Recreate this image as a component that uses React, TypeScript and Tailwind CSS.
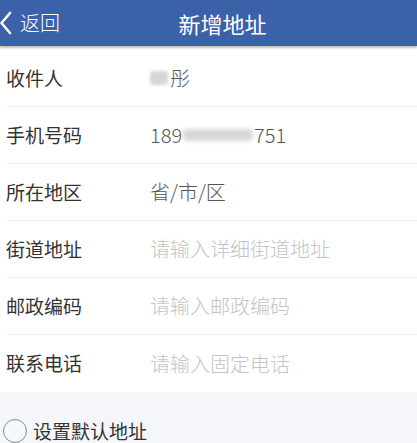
const font = { fontFamily: '"Noto Sans CJK SC", "Noto Sans", sans-serif' };

type Row = { label: string; value?: string; placeholder?: string; blur?: 'name' | 'phone' };

const rows: Row[] = [
  { label: '收件人', value: '彤', blur: 'name' },
  { label: '手机号码', value: '189', blur: 'phone' },
  { label: '所在地区', value: '省/市/区' },
  { label: '街道地址', placeholder: '请输入详细街道地址' },
  { label: '邮政编码', placeholder: '请输入邮政编码' },
  { label: '联系电话', placeholder: '请输入固定电话' },
];

function Value({ row }: { row: Row }) {
  if (row.placeholder) return <span className="text-[#c4c4c4]">{row.placeholder}</span>;
  if (row.blur === 'name')
    return (
      <span className="flex items-center text-[#555]">
        <span className="mr-[2px] inline-block h-[14px] w-[18px] rounded-sm bg-[#d6d6d6] blur-[1.5px]" />
        {row.value}
      </span>
    );
  if (row.blur === 'phone')
    return (
      <span className="flex items-center text-[#555]">
        {row.value}
        <span className="mx-[1px] inline-block h-[12px] w-[70px] rounded-sm bg-[#d8d8d8] blur-[2px]" />
        751
      </span>
    );
  return <span className="text-[#555]">{row.value}</span>;
}

export default function App() {
  return (
    <div className="flex h-[443px] w-[417px] flex-col overflow-hidden bg-[#f4f6f9]" style={font}>
      <div className="relative flex h-[46px] shrink-0 items-center justify-center bg-[#3b62a9] pl-[28px] shadow-[0_2px_2px_rgba(0,0,0,0.25)]">
        <div className="absolute left-0 top-0 flex h-full items-center text-[20px] font-light text-white">
          <svg width="18" height="24" viewBox="0 0 18 24" className="mr-[2px]">
            <path d="M10 2 L1.5 12 L10 22" fill="none" stroke="white" strokeWidth="2.6" strokeLinecap="round" strokeLinejoin="round" />
          </svg>
          返回
        </div>
        <span className="text-[22px] text-white">新增地址</span>
      </div>
      <ul className="shrink-0 bg-white pt-1">
        {rows.map((row, i) => (
          <li key={row.label} className="flex h-[57px] flex-col">
            <div className="flex flex-1 items-center">
              <span className="w-[150px] pl-[6px] text-[19px] text-[#333]">{row.label}</span>
              <span className="text-[20px] font-light"><Value row={row} /></span>
            </div>
            {i < rows.length - 1 && <div className="ml-[7px] h-px bg-[#eeeeee]" />}
          </li>
        ))}
      </ul>
      <div className="flex items-center px-[3px] pt-[25px]">
        <span className="h-[24px] w-[24px] rounded-full border-[1.5px] border-[#888] bg-[#f2f9fa]" />
        <span className="ml-[6px] text-[19px] text-[#333]">设置默认地址</span>
      </div>
    </div>
  );
}
